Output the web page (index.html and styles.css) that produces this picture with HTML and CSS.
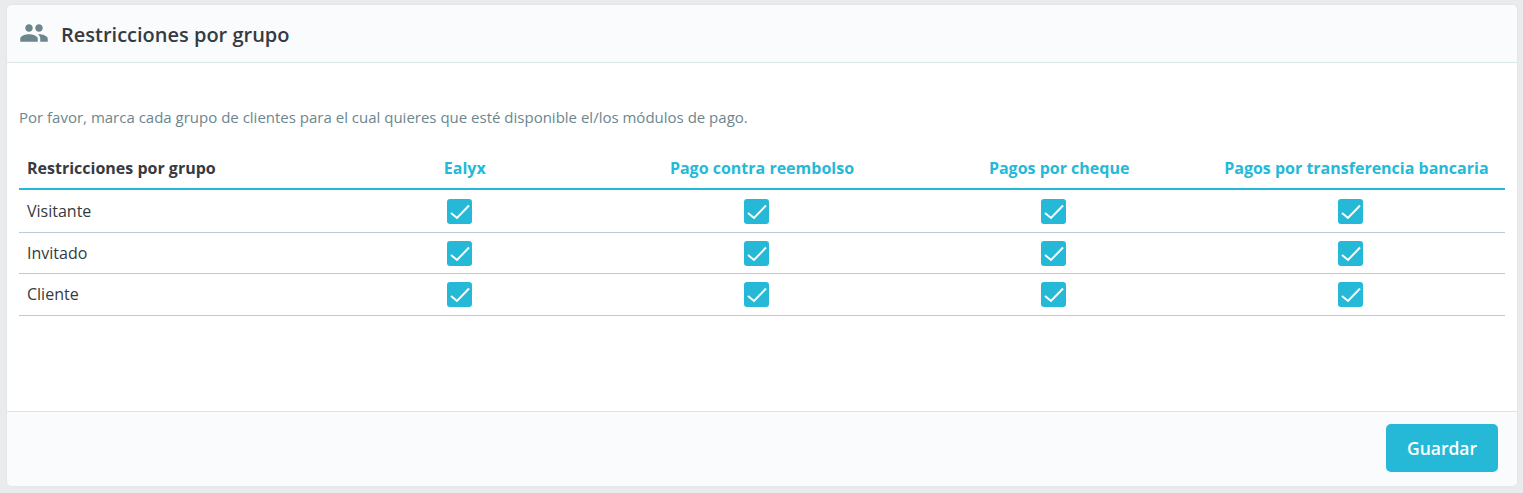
FILE: index.html
```html
<!DOCTYPE html>
<html lang="es">
<head>
<meta charset="utf-8">
<title>Restricciones por grupo</title>
<link rel="stylesheet" href="styles.css">
</head>
<body>
<section class="card">
  <header class="card-header">
    <svg class="header-icon" viewBox="0 0 24 24" aria-hidden="true"><path d="M16 11c1.66 0 2.99-1.34 2.99-3S17.66 5 16 5s-3 1.34-3 3 1.34 3 3 3zm-8 0c1.66 0 2.99-1.34 2.99-3S9.66 5 8 5 5 6.34 5 8s1.34 3 3 3zm0 2c-2.33 0-7 1.17-7 3.5V19h14v-2.5c0-2.33-4.67-3.5-7-3.5zm8 0c-.29 0-.62.02-.97.05 1.16.84 1.97 1.97 1.97 3.45V19h6v-2.5c0-2.33-4.67-3.5-7-3.5z"/></svg>
    <h1 class="card-title">Restricciones por grupo</h1>
  </header>
  <div class="card-body">
    <p class="help">Por favor, marca cada grupo de clientes para el cual quieres que esté disponible el/los módulos de pago.</p>
    <table class="matrix">
      <thead>
        <tr>
          <th class="group-head">Restricciones por grupo</th>
          <th>Ealyx</th>
          <th>Pago contra reembolso</th>
          <th>Pagos por cheque</th>
          <th>Pagos por transferencia bancaria</th>
        </tr>
      </thead>
      <tbody>
        <tr class="row-first">
          <td class="group">Visitante</td>
          <td><span class="check"><svg viewBox="0 0 25 25" aria-hidden="true"><path d="M4 14l6 5L22 6.5"/></svg></span></td>
          <td><span class="check"><svg viewBox="0 0 25 25" aria-hidden="true"><path d="M4 14l6 5L22 6.5"/></svg></span></td>
          <td><span class="check"><svg viewBox="0 0 25 25" aria-hidden="true"><path d="M4 14l6 5L22 6.5"/></svg></span></td>
          <td><span class="check"><svg viewBox="0 0 25 25" aria-hidden="true"><path d="M4 14l6 5L22 6.5"/></svg></span></td>
        </tr>
        <tr class="row-short">
          <td class="group">Invitado</td>
          <td><span class="check"><svg viewBox="0 0 25 25" aria-hidden="true"><path d="M4 14l6 5L22 6.5"/></svg></span></td>
          <td><span class="check"><svg viewBox="0 0 25 25" aria-hidden="true"><path d="M4 14l6 5L22 6.5"/></svg></span></td>
          <td><span class="check"><svg viewBox="0 0 25 25" aria-hidden="true"><path d="M4 14l6 5L22 6.5"/></svg></span></td>
          <td><span class="check"><svg viewBox="0 0 25 25" aria-hidden="true"><path d="M4 14l6 5L22 6.5"/></svg></span></td>
        </tr>
        <tr class="row-tall">
          <td class="group">Cliente</td>
          <td><span class="check"><svg viewBox="0 0 25 25" aria-hidden="true"><path d="M4 14l6 5L22 6.5"/></svg></span></td>
          <td><span class="check"><svg viewBox="0 0 25 25" aria-hidden="true"><path d="M4 14l6 5L22 6.5"/></svg></span></td>
          <td><span class="check"><svg viewBox="0 0 25 25" aria-hidden="true"><path d="M4 14l6 5L22 6.5"/></svg></span></td>
          <td><span class="check"><svg viewBox="0 0 25 25" aria-hidden="true"><path d="M4 14l6 5L22 6.5"/></svg></span></td>
        </tr>
      </tbody>
    </table>
  </div>
  <footer class="card-footer">
    <button class="save" type="button">Guardar</button>
  </footer>
</section>
</body>
</html>
```
FILE: styles.css
```css
* { box-sizing: border-box; }
html, body { height: 100%; }
body {
  margin: 0;
  padding: 5px 6px 7px 7px;
  background: #eaebec;
  font-family: "Open Sans", "Liberation Sans", sans-serif;
  font-size: 16px;
  color: #363a41;
  overflow: hidden;
}
.card {
  height: 481px;
  display: flex;
  flex-direction: column;
  background: #fff;
  border-radius: 5px;
  box-shadow: 0 0 3px rgba(0, 0, 0, 0.06);
  overflow: hidden;
}
.card-header {
  height: 58px;
  flex: none;
  display: flex;
  align-items: center;
  gap: 12px;
  padding: 0 0 0 12px;
  background: #fafbfc;
  border-bottom: 1px solid #dbe6e9;
}
.header-icon { width: 30px; height: 30px; fill: #6c868e; flex: none; margin-top: -1px; }
.card-title { margin: 0; padding-top: 2px; font-size: 20px; font-weight: 600; color: #363a41; }
.card-body { flex: 1; padding: 44px 12px 0; }
.help { margin: 0 0 22px; line-height: 20px; color: #6c868e; font-size: 15px; }
.matrix { width: 100%; border-collapse: collapse; table-layout: fixed; }
.matrix th {
  height: 40px;
  padding: 0 8px 1px;
  font-size: 16px;
  font-weight: 700;
  text-align: center;
  color: #25b9d7;
  border-bottom: 2px solid #25b9d7;
}
.matrix th.group-head { text-align: left; color: #363a41; }
.matrix td {
  padding: 0 8px;
  text-align: center;
  border-bottom: 1px solid #bbcdd2;
}
.row-first td { height: 43px; padding-top: 1px; }
.row-short td { height: 41px; padding-top: 1px; }
.row-tall td { height: 42px; }
.matrix td.group { text-align: left; font-size: 16px; }
.check {
  display: inline-flex;
  width: 25px;
  height: 25px;
  margin-right: 11px;
  vertical-align: middle;
  background: #25b9d7;
  border-radius: 3px;
}
.check svg { width: 25px; height: 25px; fill: none; stroke: #fff; stroke-width: 2; }
.card-footer {
  height: 75px;
  flex: none;
  display: flex;
  justify-content: flex-end;
  align-items: flex-start;
  padding: 12px 19px 0 0;
  background: #fafbfc;
  border-top: 1px solid #dbe6e9;
}
.save {
  width: 112px;
  height: 48px;
  border: 0;
  border-radius: 5px;
  background: #25b9d7;
  color: #fff;
  font-family: inherit;
  font-size: 17.5px;
  font-weight: 600;
}
```
